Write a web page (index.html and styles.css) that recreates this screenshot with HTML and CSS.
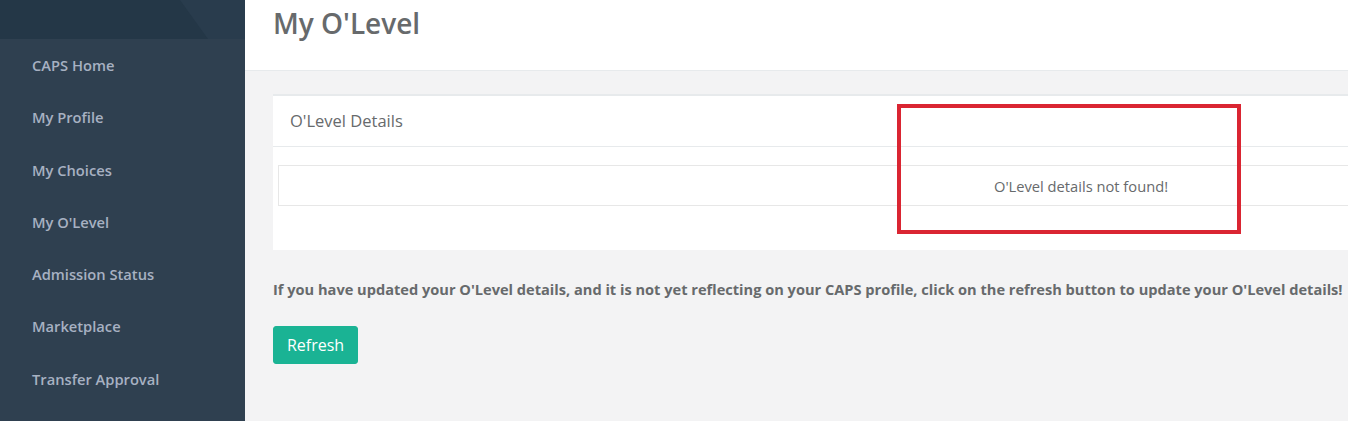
FILE: index.html
```html
<!DOCTYPE html>
<html>
<head>
<meta charset="utf-8">
<link rel="stylesheet" href="styles.css">
</head>
<body>
<div class="wrapper">
  <nav class="sidebar">
    <div class="profile-head"><span class="profile-shade"></span></div>
    <ul class="nav">
      <li>CAPS Home</li>
      <li>My Profile</li>
      <li>My Choices</li>
      <li>My O'Level</li>
      <li>Admission Status</li>
      <li>Marketplace</li>
      <li>Transfer Approval</li>
    </ul>
  </nav>
  <main class="page">
    <div class="page-heading"><h2>My O'Level</h2></div>
    <div class="content">
      <div class="ibox">
        <div class="ibox-title"><h5>O'Level Details</h5></div>
        <div class="ibox-content">
          <table class="table">
            <tr><td>O'Level details not found!</td></tr>
          </table>
        </div>
      </div>
      <p class="note">If you have updated your O'Level details, and it is not yet reflecting on your CAPS profile, click on the refresh button to update your O'Level details!</p>
      <button class="btn">Refresh</button>
    </div>
  </main>
</div>
<div class="highlight"></div>
</body>
</html>
```
FILE: styles.css
```css
html, body {
  margin: 0;
  padding: 0;
  background: #ffffff;
  overflow: hidden;
}
body {
  font-family: "Open Sans", "Liberation Sans", sans-serif;
  color: #676a6c;
  font-size: 13px;
  position: relative;
  width: 1348px;
  height: 425px;
}
.wrapper {
  display: flex;
  width: 1917px;
  height: 421px;
}
.sidebar {
  width: 245px;
  flex: none;
  background: #2f4050;
}
.profile-head {
  height: 39px;
  background: #243747;
  position: relative;
}
.profile-shade {
  position: absolute;
  inset: 0;
  background: #293c4d;
  clip-path: polygon(180px 0, 100% 0, 100% 100%, 208px 100%);
}
.nav {
  list-style: none;
  margin: 0;
  padding: 0;
}
.nav li {
  height: 52.3px;
  line-height: 52px;
  padding-left: 32px;
  color: #a7b1c2;
  font-weight: 600;
  font-size: 14.7px;
}
.page {
  flex: 1;
  background: #f3f3f4;
  display: flex;
  flex-direction: column;
}
.page-heading {
  background: #ffffff;
  height: 70px;
  border-bottom: 1px solid #e7eaec;
  padding-left: 28px;
}
.page-heading h2 {
  margin: 0;
  font-size: 28px;
  font-weight: 600;
  line-height: 46px;
  color: #676a6c;
}
.content {
  padding: 23px 28px 0 28px;
}
.ibox {
  background: #ffffff;
  border-top: 2px solid #e7eaec;
}
.ibox-title {
  height: 51px;
  box-sizing: border-box;
  padding: 0 0 2px 17px;
  border-bottom: 1px solid #e7eaec;
  display: flex;
  align-items: center;
}
.ibox-title h5 {
  margin: 0;
  font-size: 16.5px;
  font-weight: 500;
  color: #676a6c;
}
.ibox-content {
  padding: 18px 5px 44px 5px;
}
.table {
  width: 100%;
  border-collapse: collapse;
  border: 1px solid #e7e7e7;
}
.table td {
  height: 39px;
  padding: 0;
  text-align: center;
  font-size: 14.7px;
  color: #676a6c;
}
.note {
  margin: 29px 0 0 0;
  font-weight: 700;
  font-size: 14.6px;
  line-height: 20px;
}
.btn {
  margin-top: 27px;
  width: 85px;
  height: 38px;
  background: #1ab394;
  border: 1px solid #1ab394;
  border-radius: 3px;
  color: #ffffff;
  font-family: "Open Sans", "Liberation Sans", sans-serif;
  font-size: 16px;
  padding: 0;
}
.highlight {
  position: absolute;
  left: 897px;
  top: 104px;
  width: 336px;
  height: 122px;
  border: 4px solid #da2532;
}
```
